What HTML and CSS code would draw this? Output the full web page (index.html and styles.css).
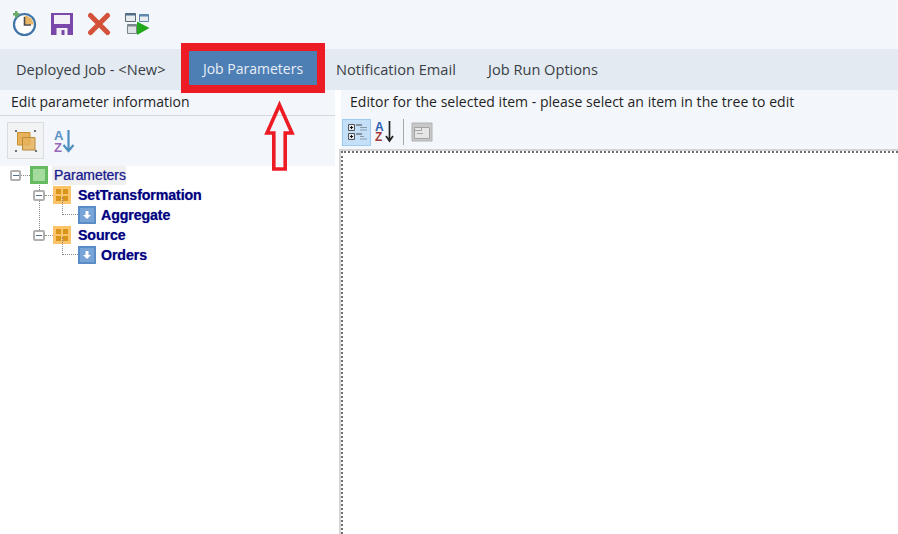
FILE: index.html
```
<!DOCTYPE html>
<html lang="en">
<head>
<meta charset="utf-8">
<title>Job Parameters</title>
<link rel="stylesheet" href="styles.css">
</head>
<body>
<div class="app">
  <div class="toolbar">
    <svg class="tool" width="28" height="28" viewBox="0 0 28 28">
      <circle cx="14.500" cy="14.500" r="10.500" fill="#fff" stroke="#3f74a8" stroke-width="2.200"/>
      <path d="M14.500 14.500V5.500A9 9 0 0 1 23.500 14.500Z" fill="#e8b566"/>
      <path d="M14.500 7v8h6.500" fill="none" stroke="#4a4a4a" stroke-width="1.600"/>
      <path d="M3 3h2V1h2.500v2h2v2.500h-2v2H5v-2H3Z" fill="#6aaa64"/>
    </svg>
    <svg class="tool" width="24" height="24" viewBox="0 0 24 24">
      <path d="M1 1h22v22H1Z" fill="#7a48a8"/>
      <path d="M4 3h16v9H4Z" fill="#f4f0f8"/>
      <path d="M6.500 16h11v7h-11Z" fill="#f4f0f8"/>
      <path d="M11.500 18h3v5h-3Z" fill="#7a48a8"/>
    </svg>
    <svg class="tool" width="24" height="24" viewBox="0 0 24 24">
      <path d="M3.500 3.500 20.500 20.500M20.500 3.500 3.500 20.500" stroke="#d4523a" stroke-width="5" stroke-linecap="round"/>
    </svg>
    <svg class="tool" width="26" height="24" viewBox="0 0 26 24">
      <path d="M1.500 1.500h10v8h-10Z" fill="#e8ecef" stroke="#5f6d78"/>
      <path d="M1.500 1.500h10v2h-10Z" fill="#4d6d8a"/>
      <path d="M15.500 2.500h9v7h-9Z" fill="#e8ecef" stroke="#5f87ad"/>
      <path d="M15.500 2.500h9v2h-9Z" fill="#5f87ad"/>
      <path d="M3.500 12.500h9v9h-9Z" fill="#dfe3e6" stroke="#7b868f"/>
      <path d="M3.500 12.500h9v2h-9Z" fill="#7b868f"/>
      <path d="M13 9.500 25.500 16 13 23Z" fill="#23a81c"/>
    </svg>
  </div>
  <nav class="tabs">
    <span class="tab tab-deployed">Deployed Job - &lt;New&gt;</span>
    <span class="tab tab-active">Job Parameters</span>
    <span class="tab tab-notify">Notification Email</span>
    <span class="tab">Job Run Options</span>
  </nav>
  <div class="panes">
    <section class="left">
      <header class="pane-head pane-head-left">Edit parameter information</header>
      <div class="left-tools">
        <span class="btn-box">
          <svg width="24" height="24" viewBox="0 0 24 24">
            <path d="M3.500 3.500h12.500v12.500H3.500Z" fill="#e8b15c" stroke="#c8912f"/>
            <path d="M8.500 8.500H21V21H8.500Z" fill="#e8b15c" fill-opacity=".85" stroke="#b78a3a"/>
            <circle cx="2" cy="2" r="1.100" fill="#555"/><circle cx="21" cy="2" r="1.100" fill="#555"/>
            <circle cx="2" cy="22" r="1.100" fill="#555"/><circle cx="22" cy="22" r="1.100" fill="#555"/>
          </svg>
        </span>
        <svg class="sort-light" width="24" height="28" viewBox="0 0 24 28">
          <text class="az az-a" x="2" y="13">A</text>
          <text class="az az-z" x="2" y="25">Z</text>
          <path d="M16.500 3v21M11.500 18l5 6 5-6" fill="none" stroke="#4f8fc0" stroke-width="2.200"/>
        </svg>
      </div>
      <div class="tree">
        <div class="node node-root">
          <span class="expander"></span><span class="hline"></span>
          <span class="ic ic-green"></span>
          <span class="label label-root">Parameters</span>
        </div>
        <div class="branch">
          <span class="vline"></span>
          <div class="node">
            <span class="expander"></span><span class="hline"></span>
            <span class="ic ic-orange"><i></i><i></i><i></i><i></i></span>
            <span class="label">SetTransformation</span>
          </div>
          <div class="node leaf">
            <span class="elbow"></span>
            <span class="ic ic-blue"><svg width="10" height="10" viewBox="0 0 10 10"><path d="M3.500 1h3v4H9L5 9 1 5h2.500Z" fill="#fff"/></svg></span>
            <span class="label">Aggregate</span>
          </div>
          <div class="node">
            <span class="expander"></span><span class="hline"></span>
            <span class="ic ic-orange"><i></i><i></i><i></i><i></i></span>
            <span class="label">Source</span>
          </div>
          <div class="node leaf">
            <span class="elbow"></span>
            <span class="ic ic-blue"><svg width="10" height="10" viewBox="0 0 10 10"><path d="M3.500 1h3v4H9L5 9 1 5h2.500Z" fill="#fff"/></svg></span>
            <span class="label">Orders</span>
          </div>
        </div>
      </div>
    </section>
    <section class="right">
      <header class="pane-head pane-head-right">Editor for the selected item - please select an item in the tree to edit</header>
      <div class="right-tools">
        <span class="cat-btn">
          <svg width="24" height="24" viewBox="0 0 24 24">
            <path d="M3.500 4.500h6v6h-6ZM3.500 13.500h6v6h-6Z" fill="#dfe6ee" stroke="#555"/>
            <path d="M5 7.500h3M6.500 6v3M5 16.500h3M6.500 15v3" stroke="#111"/>
            <path d="M11 5h6M11 14h6" stroke="#444" stroke-width="1.200"/>
            <path d="M15 7.500h7M15 10h7M15 16.500h4M15 19h7" stroke="#8b9aa5" stroke-width="1.200"/>
          </svg>
        </span>
        <svg class="sort-dark" width="24" height="26" viewBox="0 0 24 26">
          <text class="az az-small az-a2" x="1" y="12">A</text>
          <text class="az az-small az-z2" x="1" y="22">Z</text>
          <path d="M15.500 2v19M12 17l3.500 5 3.500-5" fill="none" stroke="#222" stroke-width="1.700"/>
        </svg>
        <span class="sep"></span>
        <svg class="pages" width="22" height="22" viewBox="0 0 22 22">
          <path d="M1 2h20v18H1Z" fill="#c9c9c9" stroke="#b0b0b0"/>
          <path d="M3.500 6.500h15v11h-15Z" fill="#e6e6e6" stroke="#a3a3a3"/>
          <path d="M3.500 6.500h7v3h-7ZM6 12.500h6" fill="none" stroke="#a3a3a3"/>
        </svg>
      </div>
      <div class="editor"><div class="editor-inner"></div></div>
    </section>
  </div>
  <div class="callout"></div>
  <svg class="arrow" width="36" height="76" viewBox="0 0 36 76">
    <path d="M17.500 7 30 35H23.200V71H11.800V35H5Z" fill="none" stroke="#ed1c24" stroke-width="3.600"/>
  </svg>
</div>
</body>
</html>
```
FILE: styles.css
```
* { box-sizing: border-box; }
html, body { margin: 0; height: 100%; }
body { background: #fff; overflow: hidden; }
.app {
  position: relative;
  width: 898px;
  height: 534px;
  display: flex;
  flex-direction: column;
  font-family: "Open Sans", "Noto Sans", sans-serif;
  font-size: 14px;
  color: #2b2b2b;
}
.toolbar {
  height: 49px;
  flex: none;
  background: #f3f7fb;
  display: flex;
  align-items: center;
  padding: 0 0 1px 10px;
  gap: 12px;
}
.tool { display: block; }
.tool + .tool + .tool { margin-left: 1px; }
.tabs {
  height: 41px;
  flex: none;
  background: #e3eaf2;
  display: flex;
  align-items: center;
  padding: 0 0 3px 16px;
  color: #3a3f45;
  font-size: 14.600px;
}
.tab { white-space: nowrap; padding-top: 1px; }
.tab-deployed { width: 173px; }
.tab-active {
  background: #4d7fb5;
  color: #e8eef5;
  font-size: 14px;
  height: 34px;
  line-height: 33px;
  width: 128px;
  text-align: center;
  margin-right: 19px;
}
.tab-notify { width: 152px; }
.panes { flex: 1; display: flex; min-height: 0; }
.left { width: 335px; flex: none; display: flex; flex-direction: column; }
.right { flex: 1; margin-left: 6px; min-width: 0; display: flex; flex-direction: column; }
.pane-head {
  height: 25px;
  flex: none;
  background: #f3f6fa;
  line-height: 24px;
  color: #1f1f1f;
  white-space: nowrap;
}
.pane-head-left { padding-left: 11px; border-bottom: 1px solid #d5d9dd; height: 26px; }
.pane-head-right { padding-left: 9px; letter-spacing: .03px; }
.left-tools {
  height: 50px;
  flex: none;
  background: #f3f7fb;
  display: flex;
  align-items: center;
  padding: 0 0 0 7px;
  gap: 8px;
}
.btn-box {
  width: 37px;
  height: 37px;
  margin-top: -1px;
  border: 1px solid #dadde0;
  background: #f1f3f5;
  display: flex;
  align-items: center;
  justify-content: center;
}
.az { font-family: "Liberation Sans", sans-serif; font-weight: 700; font-size: 13px; }
.az-small { font-size: 12px; }
.az-a { fill: #5b92c4; }
.az-z { fill: #9a68b8; }
.az-a2 { fill: #2d5fb0; }
.az-z2 { fill: #a23a3a; }
.sort-light { display: block; }
.tree {
  flex: 1;
  margin-top: -1px;
  font-family: "Liberation Sans", sans-serif;
  color: #000080;
}
.node { position: relative; height: 20px; display: flex; align-items: center; padding-left: 9px; }
.node-root { padding-left: 10px; }
.expander {
  width: 12px;
  height: 11px;
  flex: none;
  border: 2px solid #b0b0b0;
  border-radius: 2px;
  background-color: #fff;
  background-image: linear-gradient(#fff 0 3px, #5a6f8a 3px 4px, #fff 4px);
  background-size: 6px 100%;
  background-repeat: no-repeat;
  background-position: center;
  position: relative;
}
.node-root .expander { width: 11px; }
.hline { width: 8px; flex: none; border-top: 1px dotted #888; }
.node-root .hline { width: 9px; }
.ic { width: 18px; height: 18px; flex: none; display: block; }
.ic-green { background: #a3dc9c; border: 3px solid #66bb60; }
.ic-orange {
  background: #fbc468;
  padding: 3px;
  display: grid;
  grid-template-columns: 1fr 1fr;
  gap: 2px;
}
.ic-orange i { background: #d9941c; display: block; }
.ic-blue {
  background: #78a4d8;
  border: 2px solid #5a8cc8;
  display: flex;
  align-items: center;
  justify-content: center;
}
.label { margin-left: 7px; font-weight: 700; white-space: nowrap; letter-spacing: -.1px; font-size: 14.200px; text-shadow: 0 0 1px rgba(0,0,128,.5); }
.label-root {
  margin-left: 4px;
  padding: 0 0 0 2px;
  background: #f0f0f0;
  color: #1a1a90;
  font-weight: 400;
  font-size: 14px;
  letter-spacing: -.05px;
  line-height: 19px;
}
.branch { position: relative; padding-left: 24px; }
.vline { position: absolute; left: 39px; top: 0; height: 47px; border-left: 1px dotted #888; }
.leaf { padding-left: 38px; }
.elbow {
  width: 16px;
  height: 18px;
  flex: none;
  align-self: flex-start;
  margin-top: -8px;
  border-left: 1px dotted #888;
  border-bottom: 1px dotted #888;
}
.leaf .label { margin-left: 5px; }
.right-tools {
  height: 34px;
  flex: none;
  background: #f3f7fb;
  display: flex;
  align-items: center;
  padding: 0 0 0 1px;
}
.cat-btn {
  width: 29px;
  height: 27px;
  background: #c4e0f9;
  border: 1px solid #9fcaf0;
  display: flex;
  align-items: center;
  justify-content: center;
}
.sort-dark { margin-left: 3px; display: block; }
.sep { width: 1px; height: 26px; background: #a8a8a8; margin: 0 7px 0 5px; }
.pages { display: block; }
.editor {
  flex: 1;
  min-height: 0;
  margin-left: -2px;
  border-left: 2px solid #d4d4d4;
  border-top: 2px solid #d4d4d4;
  background: #fff;
}
.editor-inner {
  height: 100%;
  border-left: 2px dotted #707070;
  border-top: 2px dotted #707070;
}
.callout {
  position: absolute;
  left: 181px;
  top: 43px;
  width: 144px;
  height: 50px;
  border: 8px solid #ed1c24;
}
.arrow { position: absolute; left: 262px; top: 98px; }
```
